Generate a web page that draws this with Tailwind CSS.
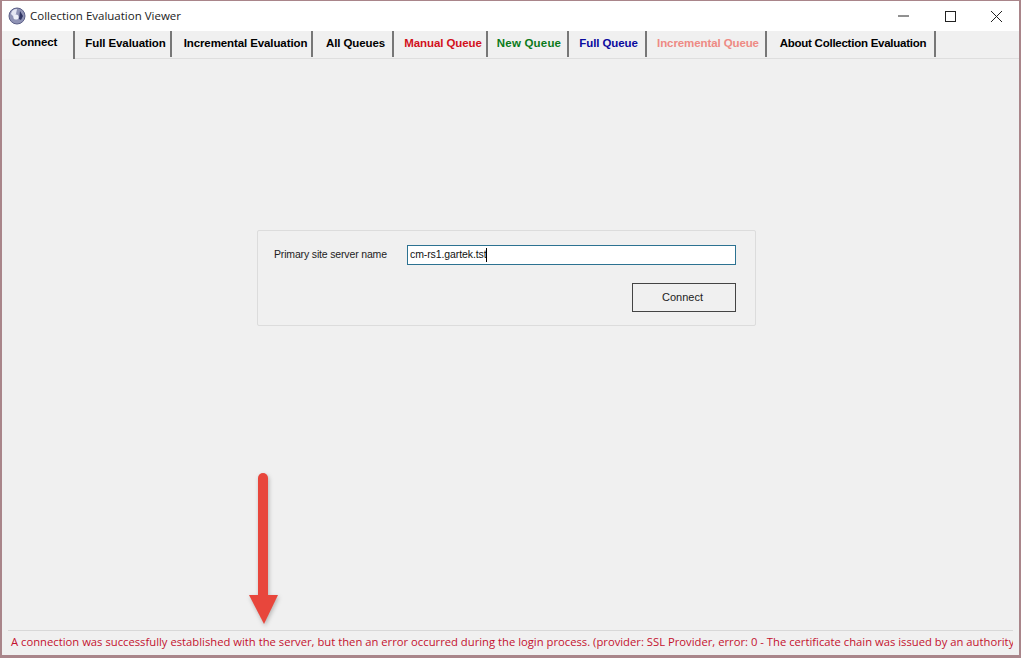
<!DOCTYPE html>
<html lang="en">
<head>
    <meta charset="UTF-8">
    <title>Collection Evaluation Viewer</title>
    <script src="https://cdn.jsdelivr.net/npm/@tailwindcss/browser@4"></script>
</head>
<body class="bg-white">
    <!-- Window -->
    <div class="w-[1021px] h-[658px] flex flex-col overflow-hidden bg-white border-t border-x-2 border-b-[3px] border-[#a9858a] font-['Open_Sans',sans-serif]">
        <!-- Title bar -->
        <div class="h-[30px] shrink-0 flex items-center bg-white">
            <svg class="ml-[6px] w-[18px] h-[18px]" viewBox="0 0 18 18">
                <circle cx="9" cy="9" r="8" fill="#8f93b5" stroke="#5c6088" stroke-width="1"/>
                <path d="M3 7a6 6 0 0 1 6-5l-1 5-2 3z" fill="#e4e6f2"/>
                <circle cx="8" cy="10" r="2.6" fill="#eef0f8"/>
                <path d="M12 4l3 5-2 4-2-1z" fill="#2f3463"/>
            </svg>
            <span class="ml-[4px] text-[11.5px] text-[#222]">Collection Evaluation Viewer</span>
            <div class="ml-auto flex items-center">
                <svg class="w-[46px] h-[30px]" viewBox="0 0 46 30"><path d="M17 15h11" stroke="#222" stroke-width="1"/></svg>
                <svg class="w-[46px] h-[30px]" viewBox="0 0 46 30"><rect x="18.5" y="10.5" width="10" height="10" fill="none" stroke="#222"/></svg>
                <svg class="w-[46px] h-[30px]" viewBox="0 0 46 30"><path d="M18 10l11 11M29 10l-11 11" stroke="#222" stroke-width="1"/></svg>
            </div>
        </div>

        <!-- Tabs -->
        <div class="h-[28px] shrink-0 flex bg-[#f0f0f0] border-b border-[#dedede] font-['Liberation_Sans',sans-serif] font-bold text-[11.5px] tracking-[-0.1px]">
            <div class="w-[73px] h-[28px] border-r-2 border-[#777] bg-[#f2f2f2] pl-[10px] pt-[3px] text-black">Connect</div>
            <div class="w-[97px] h-[26px] pl-[6px] border-r-2 border-[#777] flex items-center justify-center text-black">Full Evaluation</div>
            <div class="w-[141px] h-[26px] pl-[8px] border-r-2 border-[#777] flex items-center justify-center text-black">Incremental Evaluation</div>
            <div class="w-[81px] h-[26px] pl-[6px] border-r-2 border-[#777] flex items-center justify-center text-black">All Queues</div>
            <div class="w-[94px] h-[26px] pl-[6px] border-r-2 border-[#777] flex items-center justify-center text-[#d2101c]">Manual Queue</div>
            <div class="w-[81px] h-[26px] pl-[3px] border-r-2 border-[#777] flex items-center justify-center text-[#0a7a1a] tracking-[0.2px]">New Queue</div>
            <div class="w-[78px] h-[26px] pl-[3px] border-r-2 border-[#777] flex items-center justify-center text-[#0a0a9e]">Full Queue</div>
            <div class="w-[120px] h-[26px] pl-[4px] border-r-2 border-[#777] flex items-center justify-center text-[#ee8a84]">Incremental Queue</div>
            <div class="w-[169px] h-[26px] pl-[5px] border-r-2 border-[#777] flex items-center justify-center text-black tracking-[-0.25px]">About Collection Evaluation</div>
        </div>

        <!-- Tab content -->
        <div class="relative flex-1 min-h-0 flex flex-col bg-[#f0f0f0]">
            <div class="flex-1 min-h-0 pt-[171px] pl-[255px]">
                <div class="w-[499px] h-[96px] border border-[#dcdcdc] rounded-[2px] pt-[14px] pl-[16px] pr-[19px] font-['Liberation_Sans',sans-serif] text-[#222]">
                    <div class="flex items-center h-[20px]">
                        <span class="w-[133px] text-[10.5px] tracking-[-0.16px]">Primary site server name</span>
                        <div class="flex-1 h-[20px] border border-[#2c7291] bg-white pl-[2px] flex items-center text-[10.5px] tracking-[-0.1px] text-[#111]">cm-rs1.gartek.tst<span class="w-px h-[14px] bg-black"></span></div>
                    </div>
                    <div class="flex justify-end mt-[18px]">
                        <div class="w-[104px] h-[29px] border border-[#444] pr-[3px] flex items-center justify-center text-[11px] text-[#222]">Connect</div>
                    </div>
                </div>
            </div>

            <!-- Status line -->
            <div class="h-[25px] shrink-0 mx-[6px] border-t border-[#d8d8d8] pl-[3px] pb-[2px] flex items-center overflow-hidden whitespace-nowrap text-[11.26px] text-[#c4122f]">A connection was successfully established with the server, but then an error occurred during the login process. (provider: SSL Provider, error: 0 - The certificate chain was issued by an authority that is not trusted.)</div>

            <!-- Annotation arrow -->
            <svg class="absolute left-[238px] top-[410px] w-[50px] h-[170px] drop-shadow-[1px_2px_2px_rgba(0,0,0,0.25)]" viewBox="0 0 50 170">
                <path d="M23 9v120" stroke="#e8463c" stroke-width="10" stroke-linecap="round" fill="none"/>
                <path d="M9 126h29l-14 29z" fill="#e8463c"/>
            </svg>
        </div>
    </div>
</body>
</html>
